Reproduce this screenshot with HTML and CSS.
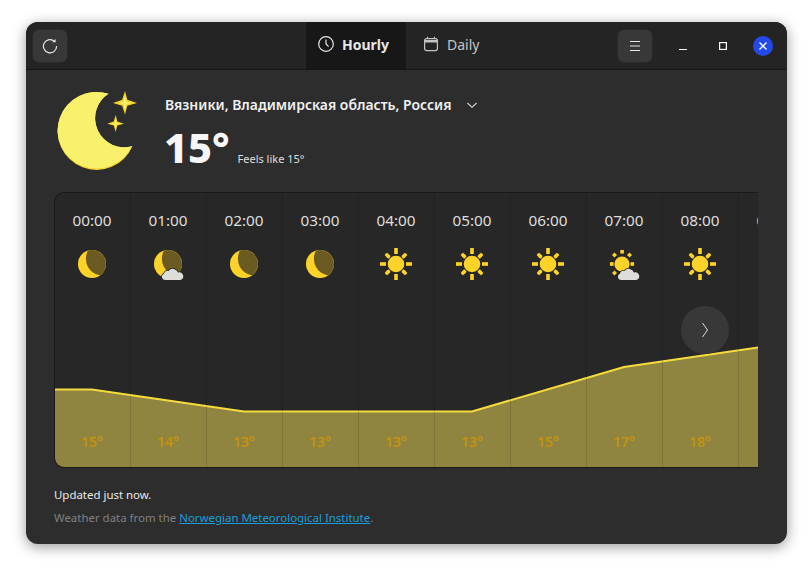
FILE: index.html
```html
<!DOCTYPE html>
<html lang="en">
<head>
    <meta charset="UTF-8">
    <meta name="viewport" content="width=device-width, initial-scale=1.0">
    <title>Weather</title>
    <link rel="stylesheet" href="styles.css">
</head>
<body>
    <svg class="defs" width="0" height="0">
        <symbol id="sun" viewBox="-16 -16 32 32">
            <circle r="8.3" fill="#fdd32a"/>
            <g fill="#fdd32a">
                <rect x="-1.8" y="-16" width="3.6" height="6"/>
                <rect x="-1.8" y="10" width="3.6" height="6"/>
                <rect x="-16" y="-1.8" width="6" height="3.6"/>
                <rect x="10" y="-1.8" width="6" height="3.6"/>
                <rect x="-1.8" y="-14.5" width="3.6" height="5.4" rx="1" transform="rotate(45)"/>
                <rect x="-1.8" y="-14.5" width="3.6" height="5.4" rx="1" transform="rotate(135)"/>
                <rect x="-1.8" y="-14.5" width="3.6" height="5.4" rx="1" transform="rotate(225)"/>
                <rect x="-1.8" y="-14.5" width="3.6" height="5.4" rx="1" transform="rotate(315)"/>
            </g>
        </symbol>
        <symbol id="moon" viewBox="-16 -16 32 32">
            <circle r="14" fill="#fdd32a"/>
            <path d="M-4 -13.4A14 14 0 0 1 8 11.5A17 17 0 0 1 -4 -13.4Z" fill="#6b5a22"/>
        </symbol>
        <symbol id="cloud-moon" viewBox="-16 -16 32 32">
            <circle r="14" fill="#fdd32a"/>
            <path d="M-4 -13.4A14 14 0 0 1 8 11.5A17 17 0 0 1 -4 -13.4Z" fill="#6b5a22"/>
            <path class="cloud" d="M-3 16A3.2 3.2 0 0 1 -4 9.8A3.5 3.5 0 0 1 .5 7A5.5 5.5 0 0 1 10 8.5A3.8 3.8 0 0 1 12.5 16Z"/>
        </symbol>
        <symbol id="cloud-sun" viewBox="-16 -16 32 32">
            <circle cx="-2" r="7.6" fill="#fdd32a"/>
            <g fill="#fdd32a">
                <rect x="-3.7" y="-14" width="3.6" height="3.6"/>
                <rect x="-14" y="-1.8" width="3.6" height="3.6"/>
                <rect x="-1.8" y="-1.8" width="3.6" height="3.6" transform="translate(-9.5 -9) rotate(45)"/>
                <rect x="-1.8" y="-1.8" width="3.6" height="3.6" transform="translate(5.5 -9) rotate(45)"/>
                <rect x="-1.8" y="-1.8" width="3.6" height="3.6" transform="translate(-9.5 9) rotate(45)"/>
                <rect x="6.5" y="-1.8" width="3.6" height="3.6"/>
            </g>
            <path class="cloud" d="M-3 16A3.2 3.2 0 0 1 -4 9.8A3.5 3.5 0 0 1 .5 7A5.5 5.5 0 0 1 10 8.5A3.8 3.8 0 0 1 12.5 16Z"/>
        </symbol>
    </svg>

    <div class="window">
        <header class="headerbar">
            <div class="bar-left">
                <button class="flat-btn">
                    <svg width="16" height="16" viewBox="0 0 16 16" fill="none" stroke="#e6e6e6" stroke-width="1.2">
                        <path d="M12.7 3.6A6.6 6.6 0 1 0 14.6 8"/>
                        <path d="M13.6 .9V4.3H10.2" fill="#e6e6e6" stroke="none"/>
                    </svg>
                </button>
            </div>
            <nav class="tabs">
                <div class="tab active">
                    <svg width="16" height="16" viewBox="0 0 16 16" fill="none" stroke="currentColor" stroke-width="1.2">
                        <circle cx="8" cy="8" r="7.3"/>
                        <path d="M8 3.5V8L10.6 10.6"/>
                    </svg>
                    <span>Hourly</span>
                </div>
                <div class="tab">
                    <svg width="16" height="16" viewBox="0 0 16 16" fill="none" stroke="currentColor" stroke-width="1.2">
                        <rect x="1.6" y="2.6" width="12.8" height="12" rx="2"/>
                        <path d="M1.6 5.2H14.4" stroke-width="2.4"/>
                        <path d="M4.5 .8V2.5M11.5 .8V2.5"/>
                    </svg>
                    <span>Daily</span>
                </div>
            </nav>
            <div class="bar-right">
                <button class="flat-btn menu-btn">
                    <svg width="12" height="12" viewBox="0 0 12 12" stroke="#e6e6e6" stroke-width="1">
                        <path d="M1 1.5H11M1 6H11M1 10.5H11"/>
                    </svg>
                </button>
                <div class="win-controls">
                    <span class="win-btn"><svg width="10" height="10" viewBox="0 0 10 10" stroke="#fff" stroke-width="1"><path d="M1 8.5H9"/></svg></span>
                    <span class="win-btn"><svg width="10" height="10" viewBox="0 0 10 10" fill="none" stroke="#fff" stroke-width="1.2"><rect x="1.6" y="1.6" width="6.8" height="6.8"/></svg></span>
                    <span class="win-btn close"><svg width="10" height="10" viewBox="0 0 10 10" stroke="#fff" stroke-width="1.3"><path d="M1.5 1.5L8.5 8.5M8.5 1.5L1.5 8.5"/></svg></span>
                </div>
            </div>
        </header>

        <main class="content">
            <section class="hero">
                <svg class="hero-icon" width="86" height="86" viewBox="54 88 86 86">
                    <clipPath id="crescent"><path d="M108.5 93.8A39 39 0 1 0 132.5 146A29 29 0 0 1 108.5 93.8Z"/></clipPath>
                    <g clip-path="url(#crescent)">
                        <rect x="54" y="88" width="86" height="86" fill="#f6d32d"/>
                        <circle cx="96.5" cy="129" r="39.5" fill="#f9f06b"/>
                    </g>
                    <path d="M125 91L127.3 99.7L137 103L127.3 105.8L125 114.5L122.2 105.8L113 103L122.2 99.7Z" fill="#f6d32d"/>
                    <path d="M125 95L126.3 101.8L132 103L126.3 104.2L125 110.5L123.5 104.2L118 103L123.5 101.8Z" fill="#f9f06b"/>
                    <path d="M115.7 115L117.3 121.4L124 123.7L117.3 125.6L115.7 132L113.7 125.6L107.3 123.7L113.7 121.4Z" fill="#f6d32d"/>
                    <path d="M115.7 118.5L116.6 122.8L120.5 123.7L116.6 124.6L115.7 128.5L114.6 124.6L111 123.7L114.6 122.8Z" fill="#f9f06b"/>
                </svg>
                <div class="hero-info">
                    <div class="place">
                        <span>Вязники, Владимирская область, Россия</span>
                        <svg width="12" height="12" viewBox="0 0 12 12" fill="none" stroke="#dedede" stroke-width="1.1"><path d="M1.5 4L6 8.3L10.5 4"/></svg>
                    </div>
                    <div class="now">
                        <span class="now-temp">15°</span>
                        <span class="feels">Feels like 15°</span>
                    </div>
                </div>
            </section>

            <section class="forecast">
                <svg class="chart" width="703" height="274" viewBox="55 193 703 274">
                    <path class="chart-fill" d="M55 389.5H92L244 411.5H472L624 367L758 347.5V467H55Z"/>
                    <path class="chart-line" d="M55 389.5H92L244 411.5H472L624 367L758 347.5"/>
                </svg>
                <div class="col"><div class="hour">00:00</div><svg class="cond"><use href="#moon"/></svg><div class="temp">15°</div></div>
                <div class="col"><div class="hour">01:00</div><svg class="cond"><use href="#cloud-moon"/></svg><div class="temp">14°</div></div>
                <div class="col"><div class="hour">02:00</div><svg class="cond"><use href="#moon"/></svg><div class="temp">13°</div></div>
                <div class="col"><div class="hour">03:00</div><svg class="cond"><use href="#moon"/></svg><div class="temp">13°</div></div>
                <div class="col"><div class="hour">04:00</div><svg class="cond"><use href="#sun"/></svg><div class="temp">13°</div></div>
                <div class="col"><div class="hour">05:00</div><svg class="cond"><use href="#sun"/></svg><div class="temp">13°</div></div>
                <div class="col"><div class="hour">06:00</div><svg class="cond"><use href="#sun"/></svg><div class="temp">15°</div></div>
                <div class="col"><div class="hour">07:00</div><svg class="cond"><use href="#cloud-sun"/></svg><div class="temp">17°</div></div>
                <div class="col"><div class="hour">08:00</div><svg class="cond"><use href="#sun"/></svg><div class="temp">18°</div></div>
                <div class="col"><div class="hour">09:00</div><svg class="cond"><use href="#sun"/></svg><div class="temp">18°</div></div>
                <button class="next-btn">
                    <svg width="16" height="16" viewBox="0 0 16 16" fill="none" stroke="#dedede" stroke-width="1"><path d="M5.5 1L10.5 8L5.5 15"/></svg>
                </button>
            </section>

            <footer class="notes">
                <p class="updated">Updated just now.</p>
                <p class="credit">Weather data from the <a href="#">Norwegian Meteorological Institute</a>.</p>
            </footer>
        </main>
    </div>
</body>
</html>
```

FILE: styles.css
```css
* { box-sizing: border-box; }
body { margin: 0; height: 572px; overflow: hidden; background: #fff; font-family: "Noto Sans", sans-serif; color: #fff; }
.defs { position: absolute; }
.cloud { fill: #deddda; stroke: #272727; stroke-width: 1.5; paint-order: stroke; }

.window { width: 761px; height: 522px; margin: 22px 0 0 26px; display: flex; flex-direction: column; background: #2d2d2d; border-radius: 12px; box-shadow: 0 3px 14px rgba(0,0,0,0.4); overflow: hidden; }

.headerbar { height: 48px; flex: none; display: grid; grid-template-columns: 280px auto 1fr; background: #242424; border-bottom: 1px solid #161616; }
.bar-left { padding: 8px 0 0 7px; }
.bar-right { display: flex; justify-content: flex-end; align-items: flex-start; padding: 8px 14px 0 0; }
.flat-btn { width: 34px; height: 32px; padding: 0; border: none; border-radius: 6px; background: #383838; box-shadow: 0 0 0 1px #2a2a2a; display: flex; align-items: center; justify-content: center; }
.win-controls { display: flex; gap: 20px; margin-left: 21px; }
.win-btn { width: 20px; height: 20px; margin-top: 6px; display: flex; align-items: center; justify-content: center; }
.win-btn.close { background: #2349e8; border-radius: 50%; }

.tabs { display: flex; }
.tab { width: 100px; display: flex; align-items: center; gap: 8px; padding: 0 0 3px 17px; font-size: 14px; color: #c4c4c4; }
.tab.active { background: #171717; color: #e8e8e8; font-weight: 700; padding-left: 12px; }

.content { flex: 1; padding: 0 29px 0 28px; min-height: 0; }

.hero { height: 122px; display: flex; align-items: flex-start; }
.hero-icon { flex: none; margin-top: 18px; margin-right: 25px; }
.hero-info { margin-top: 25px; }
.place { display: flex; align-items: center; gap: 14px; font-size: 13.95px; font-weight: 600; color: #f0f0f0; }
.now { display: flex; align-items: baseline; gap: 8px; margin-top: 5px; }
.now-temp { font-size: 41.5px; font-weight: 800; line-height: 56px; color: #f6f6f6; margin-left: -1px; }
.feels { font-size: 11px; color: #dedede; }

.forecast { position: relative; width: 704px; height: 276px; display: flex; overflow: hidden; background: #272727; border: 1px solid #1a1a1a; border-right: none; border-radius: 10px 0 0 10px; }
.chart { position: absolute; left: 0; top: 0; }
.chart-fill { fill: rgba(248,228,92,0.5); }
.chart-line { fill: none; stroke: #f5dc3c; stroke-width: 2; }
.col { position: relative; flex: 0 0 76px; display: flex; flex-direction: column; align-items: center; padding: 16px 1px 0 0; border-right: 1px solid rgba(0,0,0,0.12); }
.hour { font-size: 15.3px; line-height: 22px; color: #dedede; }
.cond { width: 32px; height: 32px; margin-top: 17px; }
.temp { margin-top: auto; margin-bottom: 15px; font-size: 14px; line-height: 20px; font-weight: 600; color: #c4930f; }
.next-btn { position: absolute; left: 626px; top: 113px; width: 48px; height: 48px; padding: 0; border: none; border-radius: 50%; background: #383838; display: flex; align-items: center; justify-content: center; }

.notes { padding-top: 15px; font-size: 11.45px; }
.notes p { margin: 0; line-height: 23px; }
.updated { color: #e8e8e8; }
.credit { color: #808080; }
.credit a { color: #1b9ddb; }
```
